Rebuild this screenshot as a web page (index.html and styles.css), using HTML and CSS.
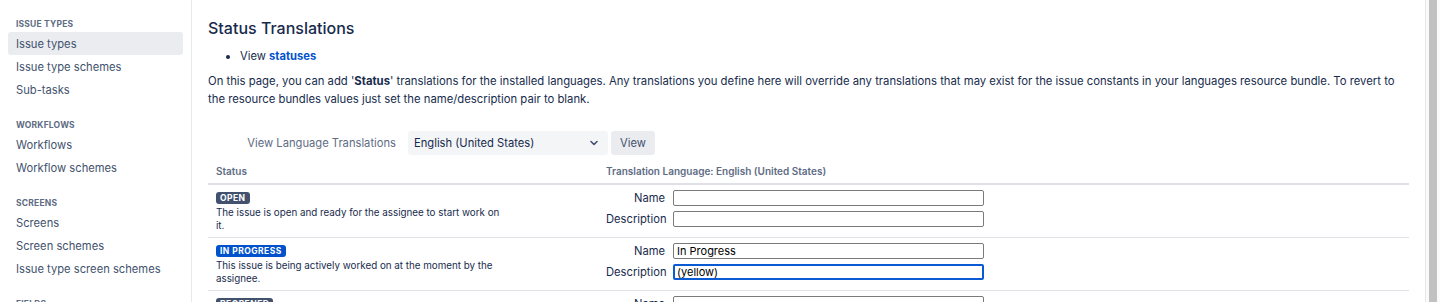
FILE: index.html
```html
<!DOCTYPE html>
<html lang="en">
<head>
    <meta charset="UTF-8">
    <meta name="viewport" content="width=device-width, initial-scale=1.0">
    <title>Status Translations</title>
    <link rel="stylesheet" href="styles.css">
</head>
<body>

    <div class="layout">

        <!-- Admin sidebar -->
        <nav class="sidebar">
            <div class="nav-group">
                <h4 class="nav-heading">Issue types</h4>
                <ul class="nav-list">
                    <li class="nav-item active">Issue types</li>
                    <li class="nav-item">Issue type schemes</li>
                    <li class="nav-item">Sub-tasks</li>
                </ul>
            </div>
            <div class="nav-group">
                <h4 class="nav-heading">Workflows</h4>
                <ul class="nav-list">
                    <li class="nav-item">Workflows</li>
                    <li class="nav-item">Workflow schemes</li>
                </ul>
            </div>
            <div class="nav-group">
                <h4 class="nav-heading">Screens</h4>
                <ul class="nav-list">
                    <li class="nav-item">Screens</li>
                    <li class="nav-item">Screen schemes</li>
                    <li class="nav-item">Issue type screen schemes</li>
                </ul>
            </div>
            <div class="nav-group">
                <h4 class="nav-heading">Fields</h4>
            </div>
        </nav>

        <!-- Main content -->
        <main class="content">
            <h2 class="page-title">Status Translations</h2>
            <ul class="links">
                <li>View <a href="#">statuses</a></li>
            </ul>
            <p class="intro">On this page, you can add '<strong>Status</strong>' translations for the installed languages. Any translations you define here will override any translations that may exist for the issue constants in your languages resource bundle. To revert to the resource bundles values just set the name/description pair to blank.</p>

            <form class="lang-form">
                <label class="lang-label" for="lang">View Language Translations</label>
                <div class="select-wrap">
                    <select id="lang" class="select">
                        <option>English (United States)</option>
                    </select>
                    <svg class="chevron" width="8" height="6" viewBox="0 0 8 6">
                        <path d="M1 1.5 L4 4.5 L7 1.5" fill="none" stroke="#42526e" stroke-width="1.6" stroke-linecap="round" stroke-linejoin="round"/>
                    </svg>
                </div>
                <button type="button" class="btn">View</button>
            </form>

            <table class="translations">
                <thead>
                    <tr>
                        <th class="col-status">Status</th>
                        <th>Translation Language: English (United States)</th>
                    </tr>
                </thead>
                <tbody>
                    <tr>
                        <td>
                            <span class="lozenge">Open</span>
                            <p class="status-desc">The issue is open and ready for the assignee to start work on it.</p>
                        </td>
                        <td>
                            <div class="fields">
                                <label>Name</label>
                                <input type="text" class="field" value="">
                                <label>Description</label>
                                <input type="text" class="field" value="">
                            </div>
                        </td>
                    </tr>
                    <tr>
                        <td>
                            <span class="lozenge lozenge-blue">In Progress</span>
                            <p class="status-desc">This issue is being actively worked on at the moment by the assignee.</p>
                        </td>
                        <td>
                            <div class="fields">
                                <label>Name</label>
                                <input type="text" class="field" value="In Progress">
                                <label>Description</label>
                                <input type="text" class="field is-focused" value="(yellow)">
                            </div>
                        </td>
                    </tr>
                    <tr>
                        <td>
                            <span class="lozenge">Reopened</span>
                            <p class="status-desc">This issue was once resolved, but the resolution was deemed incorrect.</p>
                        </td>
                        <td>
                            <div class="fields">
                                <label>Name</label>
                                <input type="text" class="field" value="">
                                <label>Description</label>
                                <input type="text" class="field" value="">
                            </div>
                        </td>
                    </tr>
                </tbody>
            </table>
        </main>

        <!-- Page scrollbar -->
        <div class="scrollbar">
            <div class="scroll-thumb"></div>
        </div>
    </div>

</body>
</html>
```

FILE: styles.css
```css
/* Theme colours */
:root {
    --text: #172b4d;
    --text-subtle: #42526e;
    --text-muted: #5e6c84;
    --border: #dfe1e6;
    --bg-neutral: #ebecf0;
    --bg-input: #f4f5f7;
    --blue: #0052cc;
    --font: 'Inter', 'Liberation Sans', sans-serif;
}

* {
    margin: 0;
    padding: 0;
    box-sizing: border-box;
}

html, body {
    height: 100%;
    overflow: hidden;
}

body {
    font-family: var(--font);
    font-size: 11.2px;
    color: var(--text);
    background: #fff;
}

.layout {
    display: flex;
    height: 100vh;
}

/* Sidebar */
.sidebar {
    width: 192px;
    flex-shrink: 0;
    border-right: 1px solid #e6e8ec;
    padding: 17px 8px;
}

.nav-group + .nav-group {
    margin-top: 17px;
}

.nav-heading {
    font-size: 8.5px;
    font-weight: 700;
    line-height: 14px;
    text-transform: uppercase;
    letter-spacing: 0.2px;
    color: var(--text-muted);
    padding: 0 8px;
    margin-bottom: 1px;
}

.nav-list {
    list-style: none;
}

.nav-item {
    height: 23px;
    line-height: 24px;
    padding: 0 8px;
    border-radius: 3px;
    color: var(--text-subtle);
    white-space: nowrap;
}

.nav-item.active {
    background: var(--bg-neutral);
    line-height: 23px;
    padding-top: 1px;
}

/* Main area */
.content {
    flex: 1;
    padding: 18px 16px 0;
    min-width: 0;
}

.page-title {
    font-size: 16px;
    font-weight: 500;
    line-height: 20px;
    margin-bottom: 9px;
}

.links {
    padding-left: 32px;
    line-height: 18px;
    margin-bottom: 7px;
}

.links a {
    color: var(--blue);
    font-weight: 700;
    text-decoration: none;
}

.intro {
    font-size: 11.3px;
    line-height: 18px;
}

/* Language picker */
.lang-form {
    display: flex;
    align-items: center;
    gap: 3px;
    margin-top: 23px;
}

.lang-label {
    width: 188px;
    text-align: right;
    color: var(--text-muted);
    margin-right: 9px;
}

.select-wrap {
    position: relative;
}

.select {
    appearance: none;
    -webkit-appearance: none;
    width: 200px;
    height: 24px;
    border: none;
    border-radius: 3px;
    background: var(--bg-input);
    font-family: var(--font);
    font-size: 11.2px;
    color: var(--text);
    padding: 0 6px;
}

.chevron {
    position: absolute;
    right: 10px;
    top: 9px;
}

.btn {
    height: 24px;
    padding: 0 9px;
    border: none;
    border-radius: 3px;
    background: var(--bg-neutral);
    font-family: var(--font);
    font-size: 11.2px;
    color: var(--text-subtle);
}

/* Translations table */
.translations {
    width: 100%;
    table-layout: fixed;
    border-collapse: collapse;
    margin-top: 5px;
}

.translations th {
    text-align: left;
    font-size: 10px;
    font-weight: 600;
    line-height: 14px;
    color: var(--text-muted);
    padding: 4px 8px 5px;
    border-bottom: 2px solid var(--border);
}

.col-status {
    width: 390px;
}

.translations td {
    vertical-align: top;
    padding: 5px 8px 10px;
    border-bottom: 1px solid var(--border);
}

.translations td:first-child {
    padding-bottom: 4px;
}

.lozenge {
    display: inline-block;
    margin-top: 2px;
    padding: 0 4px;
    height: 12px;
    line-height: 12px;
    border-radius: 3px;
    background: var(--text-subtle);
    color: #fff;
    font-size: 8.5px;
    font-weight: 700;
    text-transform: uppercase;
    letter-spacing: 0.45px;
}

.lozenge-blue {
    background: var(--blue);
}

.status-desc {
    max-width: 289px;
    margin-top: 2px;
    font-size: 9.8px;
    line-height: 13px;
    color: var(--text);
}

.fields {
    display: grid;
    grid-template-columns: 59px 311px;
    column-gap: 8px;
    row-gap: 5px;
    align-items: center;
}

.fields label {
    text-align: right;
    white-space: nowrap;
}

.field {
    height: 16px;
    border: 1px solid #7a7a7a;
    border-radius: 2px;
    padding: 0 3px;
    font-family: var(--font);
    font-size: 11px;
    color: #000;
    background: #fff;
}

.field.is-focused {
    border: 2px solid #0a5bd3;
    padding: 0 2px;
}

/* Fake scrollbar on the right */
.scrollbar {
    width: 15px;
    flex-shrink: 0;
    border-left: 1px solid #e8e8e8;
    background: #fafafa;
    padding: 0 3px;
}

.scroll-thumb {
    height: 100%;
    background: #c1c1c1;
}
```
